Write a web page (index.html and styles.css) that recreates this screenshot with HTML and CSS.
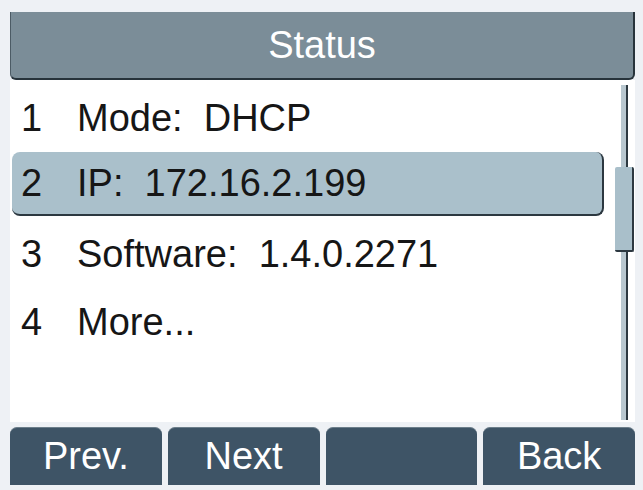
FILE: index.html
```html
<!DOCTYPE html>
<html lang="en">

<head>
    <meta charset="UTF-8">
    <meta name="viewport" content="width=device-width, initial-scale=1.0">
    <title>Status</title>
    <link rel="stylesheet" href="styles.css">
</head>

<body>
    <div class="phone">
        <div class="title">Status</div>

        <div class="main">
            <div class="rows">
                <div class="row"><span class="num">1</span><span class="label">Mode:&nbsp; DHCP</span></div>
                <div class="row selected"><span class="num">2</span><span class="label">IP:&nbsp; 172.16.2.199</span></div>
                <div class="row"><span class="num">3</span><span class="label">Software:&nbsp; 1.4.0.2271</span></div>
                <div class="row"><span class="num">4</span><span class="label">More...</span></div>
            </div>
            <div class="scroll">
                <div class="track"></div>
                <div class="thumb"></div>
            </div>
        </div>

        <div class="keys">
            <div class="key">Prev.</div>
            <div class="key">Next</div>
            <div class="key"></div>
            <div class="key">Back</div>
        </div>
    </div>
</body>

</html>
```

FILE: styles.css
```css
body {
    margin: 0;
    background: #eef1f5;
    font-family: "Liberation Sans", Arial, sans-serif;
}

.phone {
    width: 643px;
    height: 490px;
    padding: 12px 8px 0 10px;
    box-sizing: border-box;
}

.title {
    height: 68px;
    box-sizing: border-box;
    display: flex;
    align-items: center;
    justify-content: center;
    background: #7b8d98;
    color: #fff;
    font-size: 38px;
    border-left: 1px solid #4c5b65;
    border-right: 2px solid #27333b;
    border-bottom: 2px solid #27333b;
    border-radius: 0 0 6px 6px;
}

.main {
    display: flex;
    height: 342px;
    background: #fff;
}

.rows {
    width: 594px;
    padding: 4px 0 0 2px;
    box-sizing: border-box;
}

.row {
    height: 68px;
    box-sizing: border-box;
    display: flex;
    align-items: center;
    padding-left: 9px;
    font-size: 38px;
    color: #161616;
}

.row.selected {
    height: 64px;
    margin-bottom: 4px;
    background: #aac0cb;
    border-right: 2px solid #2c3840;
    border-bottom: 2px solid #2c3840;
    border-radius: 8px;
}

.num {
    width: 56px;
    flex-shrink: 0;
}

.label {
    white-space: nowrap;
}

/* scrollbar: thin track with the thumb sitting over it */
.scroll {
    position: relative;
    width: 21px;
    margin: 5px 0 2px auto;
}

.track {
    width: 5px;
    height: 100%;
    margin-left: 7px;
    background: #b8c7cf;
    border-right: 2px solid #2c3840;
}

.thumb {
    position: absolute;
    top: 82px;
    left: 1px;
    width: 17px;
    height: 83px;
    background: #a9bfca;
    border-right: 2px solid #2c3840;
    border-bottom: 2px solid #2c3840;
    border-radius: 2px;
}

.keys {
    display: grid;
    grid-template-columns: repeat(4, 1fr);
    gap: 6px;
    margin-top: 5px;
    height: 58px;
}

.key {
    display: flex;
    align-items: center;
    justify-content: center;
    background: #3e5466;
    color: #fff;
    font-size: 38px;
    border-top: 1px solid #6c7e8a;
    border-radius: 7px 7px 0 0;
}
```
